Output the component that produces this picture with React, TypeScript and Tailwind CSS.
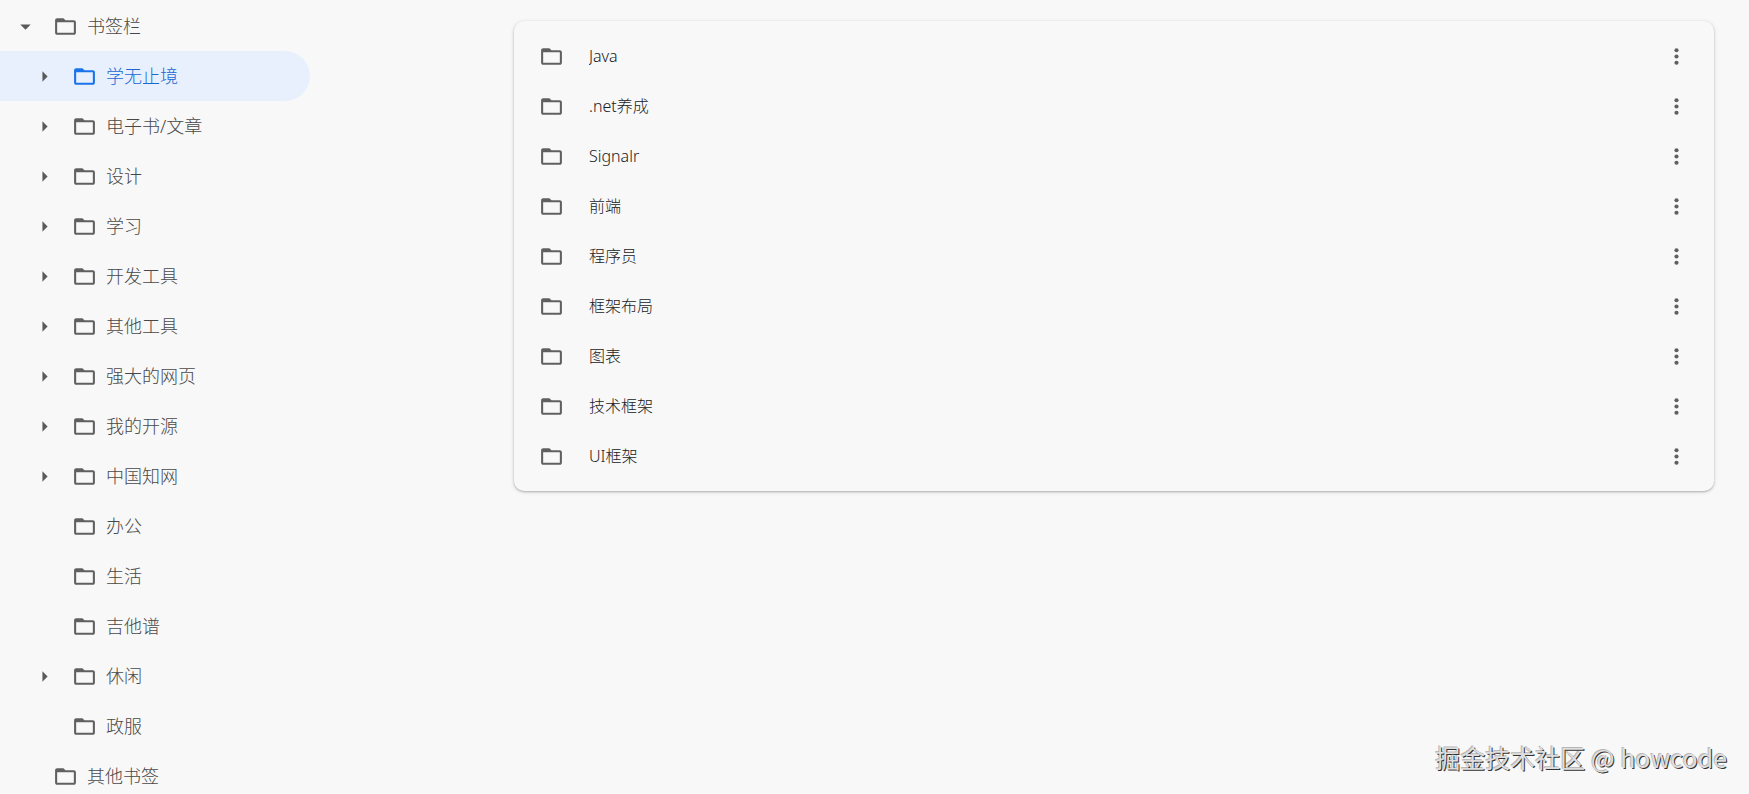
import { useState } from "react";

type TreeNode = {
  name: string;
  level: 0 | 1;
  arrow?: "open" | "closed";
};

const TREE: TreeNode[] = [
  { name: "书签栏", level: 0, arrow: "open" },
  { name: "学无止境", level: 1, arrow: "closed" },
  { name: "电子书/文章", level: 1, arrow: "closed" },
  { name: "设计", level: 1, arrow: "closed" },
  { name: "学习", level: 1, arrow: "closed" },
  { name: "开发工具", level: 1, arrow: "closed" },
  { name: "其他工具", level: 1, arrow: "closed" },
  { name: "强大的网页", level: 1, arrow: "closed" },
  { name: "我的开源", level: 1, arrow: "closed" },
  { name: "中国知网", level: 1, arrow: "closed" },
  { name: "办公", level: 1 },
  { name: "生活", level: 1 },
  { name: "吉他谱", level: 1 },
  { name: "休闲", level: 1, arrow: "closed" },
  { name: "政服", level: 1 },
  { name: "其他书签", level: 0 },
];

const ITEMS = [
  "Java",
  ".net养成",
  "Signalr",
  "前端",
  "程序员",
  "框架布局",
  "图表",
  "技术框架",
  "UI框架",
];

export default function App() {
  const [selected, setSelected] = useState("学无止境");

  return (
    <div className="relative flex min-h-screen items-start overflow-hidden bg-[#f8f8f8] font-['Noto_Sans','Noto_Sans_CJK_SC',sans-serif] font-light">
      <nav aria-label="书签文件夹" className="w-[310px] shrink-0 pt-px">
        {TREE.map((node) => (
          <TreeRow
            key={node.name}
            node={node}
            selected={node.name === selected}
            onSelect={() => setSelected(node.name)}
          />
        ))}
      </nav>

      <main className="min-w-0 flex-1 pt-[21px] pr-[35px] pl-[204px]">
        <ul className="rounded-[10px] bg-[#f8f8f8] py-[10px] shadow-[0_1px_2px_rgba(60,60,60,0.3),0_1px_4px_rgba(60,60,60,0.15)]">
          {ITEMS.map((name) => (
            <li key={name} className="flex h-[50px] items-center px-[25px]">
              <FolderIcon className="text-[#606060]" />
              <a
                href="#"
                className="ml-[25px] flex-1 truncate text-base text-[#202124]"
              >
                {name}
              </a>
              <button type="button" aria-label={`${name} 的更多操作`}>
                <MoreIcon />
              </button>
            </li>
          ))}
        </ul>
      </main>

      {/* Watermark */}
      <p className="absolute right-[22px] bottom-[26px] font-['Noto_Sans_CJK_SC',sans-serif] text-[25px] leading-9 font-normal text-[#dedede] [text-shadow:1px_1px_0_#333,-1px_-1px_0_#b8b8b8]">
        掘金技术社区 @ howcode
      </p>

      {/* Rounded window corner */}
      <svg
        className="absolute bottom-0 left-0"
        width="6"
        height="6"
        viewBox="0 0 6 6"
        aria-hidden="true"
      >
        <path d="M0 0Q1 4 6 6H0z" fill="#a0a0a0" />
      </svg>
    </div>
  );
}

function TreeRow({
  node,
  selected,
  onSelect,
}: {
  node: TreeNode;
  selected: boolean;
  onSelect: () => void;
}) {
  return (
    <button
      type="button"
      onClick={onSelect}
      className={`flex h-[50px] w-full items-center rounded-r-full text-left ${
        node.level === 0 ? "pl-[13px]" : "pl-8"
      } ${selected ? "bg-[#e8f0fe] text-[#1967d2]" : "text-[#484848]"}`}
    >
      <span className="mr-[15px] size-[25px] shrink-0 text-[#5a5a5a]">
        {node.arrow && (
          <svg
            viewBox="0 0 24 24"
            fill="currentColor"
            className="size-[25px]"
            aria-hidden="true"
          >
            <path
              d={node.arrow === "open" ? "M7 10l5 5 5-5z" : "M10 17l5-5-5-5z"}
            />
          </svg>
        )}
      </span>
      <FolderIcon className={selected ? "text-[#1a73e8]" : "text-[#606060]"} />
      <span className="ml-[9px] truncate text-lg">{node.name}</span>
    </button>
  );
}

function FolderIcon({ className }: { className: string }) {
  return (
    <svg
      viewBox="0 0 24 24"
      fill="currentColor"
      className={`size-[25px] shrink-0 ${className}`}
      aria-hidden="true"
    >
      <path d="M20 6h-8l-2-2H4c-1.1 0-1.99.9-1.99 2L2 18c0 1.1.9 2 2 2h16c1.1 0 2-.9 2-2V8c0-1.1-.9-2-2-2zm0 12H4V8h16v10z" />
    </svg>
  );
}

function MoreIcon() {
  return (
    <svg
      viewBox="0 0 24 24"
      fill="#606060"
      className="size-[25px]"
      aria-hidden="true"
    >
      <circle cx="12" cy="6" r="2" />
      <circle cx="12" cy="12" r="2" />
      <circle cx="12" cy="18" r="2" />
    </svg>
  );
}
